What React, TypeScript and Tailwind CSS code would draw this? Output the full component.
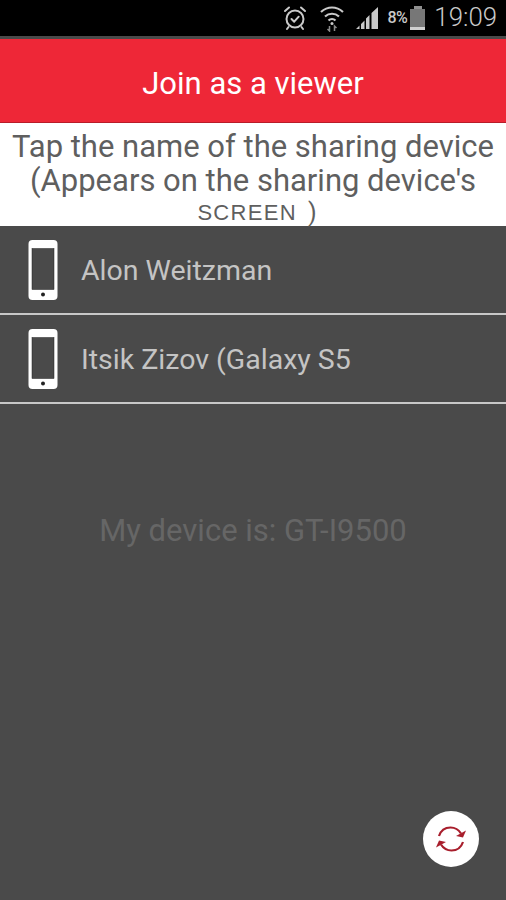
import React from 'react';

const PhoneIcon = () => (
  <svg width="32" height="62" viewBox="0 0 32 62" className="shrink-0">
    <rect x="1.5" y="1" width="29" height="60" rx="4" fill="#fff" />
    <rect x="5" y="9.5" width="22" height="41" fill="#4a4a4a" stroke="#222" strokeWidth="0.5" />
    <circle cx="16" cy="55.5" r="2" fill="#222" />
  </svg>
);

const DeviceRow = ({ name }: { name: string }) => (
  <div className="flex h-[87px] items-center pl-[27px]">
    <PhoneIcon />
    <span className="ml-[22px] pt-[3px] text-[28.500px] text-[#c4c4c4]">{name}</span>
  </div>
);

const StatusBar = () => (
  <div className="flex h-[36px] items-center justify-end bg-black pr-[9px] text-[#c9c9c9]">
    <svg width="26" height="26" viewBox="0 0 26 26" fill="none" stroke="#c9c9c9" strokeWidth="2" strokeLinecap="round" strokeLinejoin="round">
      <circle cx="13" cy="14" r="8.5" />
      <path d="M9.5 14l2.7 2.7 4.5-5M3 6l4-3.5M23 6l-4-3.5M6.5 22l-1.5 2M19.5 22l1.5 2" />
    </svg>
    <svg width="26" height="28" viewBox="0 0 26 28" fill="none" stroke="#c9c9c9" strokeWidth="2.2" className="ml-[11px]">
      <path d="M2 8c6.5-6 15.500-6 22 0M6 12.500c4-3.700 10-3.700 14 0M9.500 16.500c2-1.800 5-1.800 7 0" />
      <circle cx="13" cy="19.500" r="1.500" fill="#c9c9c9" stroke="none" />
      <path d="M10.500 22v5l-2-2M15.500 27v-5l2 2" strokeWidth="1.500" stroke="#8a8a8a" />
    </svg>
    <svg width="24" height="24" viewBox="0 0 24 24" fill="#c9c9c9" className="ml-[10px]">
      <path d="M1 23l3.500-3.500V23zM6 23v-5l3.500-3.500V23zM11 23V12.500L14.500 9V23zM16.500 23V7L23 1v22z" />
    </svg>
    <span className="ml-[8px] text-[16px] font-medium tracking-[-0.5px]">8%</span>
    <div className="ml-[3px] flex flex-col items-center">
      <div className="h-[3px] w-[8px] bg-[#8f8f8f]" />
      <div className="flex h-[21px] w-[15px] flex-col justify-end bg-[#777]">
        <div className="h-[3px] bg-[#d0d0d0]" />
      </div>
    </div>
    <span className="ml-[9px] text-[25.800px] font-light leading-none">19:09</span>
  </div>
);

export default function App() {
  return (
    <div className="flex h-[900px] w-[506px] flex-col overflow-hidden bg-[#4a4a4a] font-['Roboto',sans-serif]">
      <StatusBar />
      <div className="h-[3px] bg-[#4a4a4a]" />
      <div className="flex h-[84px] items-center justify-center border-b border-[#b81c2a] bg-[#ee2737] pt-[7px] text-[31px] text-white">
        Join as a viewer
      </div>
      <div className="flex h-[103px] flex-col items-center bg-white pt-[7px] text-[31px] leading-[34px] text-[#5f5f5f]">
        <div>Tap the name of the sharing device</div>
        <div>(Appears on the sharing device's</div>
        <div className="flex items-center pl-[8px] leading-[29px]">
          <span className="font-['Liberation_Sans',sans-serif] text-[22px] tracking-[1.300px]">SCREEN</span>
          <span className="ml-[11px] text-[25px]">)</span>
        </div>
      </div>
      <DeviceRow name="Alon Weitzman" />
      <div className="h-[2px] bg-[#c8c8c8]" />
      <DeviceRow name="Itsik Zizov (Galaxy S5" />
      <div className="h-[2px] bg-[#c8c8c8]" />
      <div className="mt-[109px] text-center text-[31px] leading-[36px] text-[#666]">My device is: GT-I9500</div>
      <div className="mt-auto mb-[33px] mr-[27px] flex justify-end">
        <button className="flex h-[56px] w-[56px] items-center justify-center rounded-full bg-white">
          <svg width="32" height="30" viewBox="0 0 32 30" fill="none" stroke="#a81e2c" strokeWidth="2.2">
            <path d="M4 12C6 6 10.500 3.500 15.500 3.500c4.500 0 8 2 10.500 6" />
            <path d="M28 18c-2 6-6.500 8.500-11.500 8.500-4.500 0-8-2-10.500-6" />
            <path d="M31 6.500l-3 7-7-1.500z" fill="#a81e2c" stroke="none" />
            <path d="M1 23.500l3-7 7 1.500z" fill="#a81e2c" stroke="none" />
          </svg>
        </button>
      </div>
    </div>
  );
}
